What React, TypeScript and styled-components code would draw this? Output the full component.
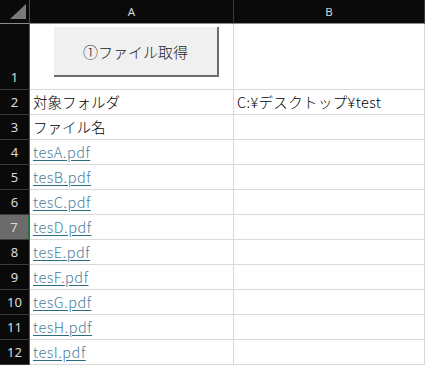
import React from "react";
import styled, { createGlobalStyle } from "styled-components";

const Global = createGlobalStyle`
  html, body { margin: 0; padding: 0; background: #ffffff; overflow: hidden; }
  * { box-sizing: border-box; }
`;

const Sheet = styled.div`
  display: grid;
  grid-template-columns: 30px 204px 191px;
  grid-template-rows: 24px 66px repeat(11, 25px);
  width: 425px;
  height: 365px;
`;

const Corner = styled.div`
  background: #0a0a0a;
  border-right: 1px solid #4a4a4a;
  border-bottom: 1px solid #8a8a8a;
  display: flex;
  align-items: flex-end;
  justify-content: flex-end;
  padding: 0 3px 4px 0;
`;

const ColHeader = styled.div`
  background: #0a0a0a;
  color: #d6d6d6;
  border-right: 1px solid #3a3a3a;
  border-bottom: 1px solid #8a8a8a;
  display: flex;
  align-items: center;
  justify-content: center;
  font-family: "Noto Sans", "Liberation Sans", sans-serif;
  font-size: 11.5px;
`;

const RowHeader = styled.div<{ $active?: boolean }>`
  background: ${(p) => (p.$active ? "#6b6b6b" : "#0a0a0a")};
  color: #dcdcdc;
  border-bottom: 1px solid #3c3c3c;
  border-right: ${(p) => (p.$active ? "2px solid #217346" : "1px solid #5a5a5a")};
  display: flex;
  align-items: flex-end;
  justify-content: center;
  font-family: "Noto Sans", "Liberation Sans", sans-serif;
  font-size: 13px;
  line-height: 24px;
`;

const Cell = styled.div<{ $spacing?: number }>`
  background: #ffffff;
  border-right: 1px solid #d9d9d9;
  border-bottom: 1px solid #d9d9d9;
  display: flex;
  align-items: flex-end;
  padding: 0 3px 0 3px;
  font-family: "Noto Sans CJK JP", "Noto Sans", sans-serif;
  font-weight: 300;
  font-size: 14.5px;
  line-height: 24px;
  letter-spacing: ${(p) => p.$spacing ?? 0}px;
  color: #000000;
  white-space: nowrap;
  overflow: hidden;
`;

const ButtonCell = styled(Cell)`
  align-items: flex-start;
  padding: 3px 0 0 24px;
`;

const SheetButton = styled.div`
  width: 165px;
  height: 50px;
  background: #f0f0f0;
  border-right: 2px solid #6e6e6e;
  border-bottom: 2px solid #6e6e6e;
  display: flex;
  align-items: center;
  justify-content: center;
  font-family: "Noto Sans CJK JP", "Noto Sans", sans-serif;
  font-weight: 300;
  font-size: 15px;
  color: #1a1a1a;
  padding-top: 1px;
`;

const Link = styled.span`
  color: #4a7d9c;
  letter-spacing: 0.5px;
  text-decoration: underline;
  text-decoration-color: #2d6b80;
  text-underline-offset: 2px;
`;

const files = ["tesA.pdf", "tesB.pdf", "tesC.pdf", "tesD.pdf", "tesE.pdf", "tesF.pdf", "tesG.pdf", "tesH.pdf", "tesI.pdf"];

export default function App() {
  return (
    <>
      <Global />
      <Sheet>
        <Corner>
          <svg width="16" height="15" viewBox="0 0 16 15">
            <polygon points="16,0 16,15 0,15" fill="#7a7a7a" />
          </svg>
        </Corner>
        <ColHeader>A</ColHeader>
        <ColHeader>B</ColHeader>

        <RowHeader>1</RowHeader>
        <ButtonCell>
          <SheetButton>①ファイル取得</SheetButton>
        </ButtonCell>
        <Cell />

        <RowHeader>2</RowHeader>
        <Cell>対象フォルダ</Cell>
        <Cell $spacing={0.35}>C:¥デスクトップ¥test</Cell>

        <RowHeader>3</RowHeader>
        <Cell>ファイル名</Cell>
        <Cell />

        {files.map((f, i) => (
          <React.Fragment key={f}>
            <RowHeader $active={i + 4 === 7}>{i + 4}</RowHeader>
            <Cell>
              <Link>{f}</Link>
            </Cell>
            <Cell />
          </React.Fragment>
        ))}
      </Sheet>
    </>
  );
}
